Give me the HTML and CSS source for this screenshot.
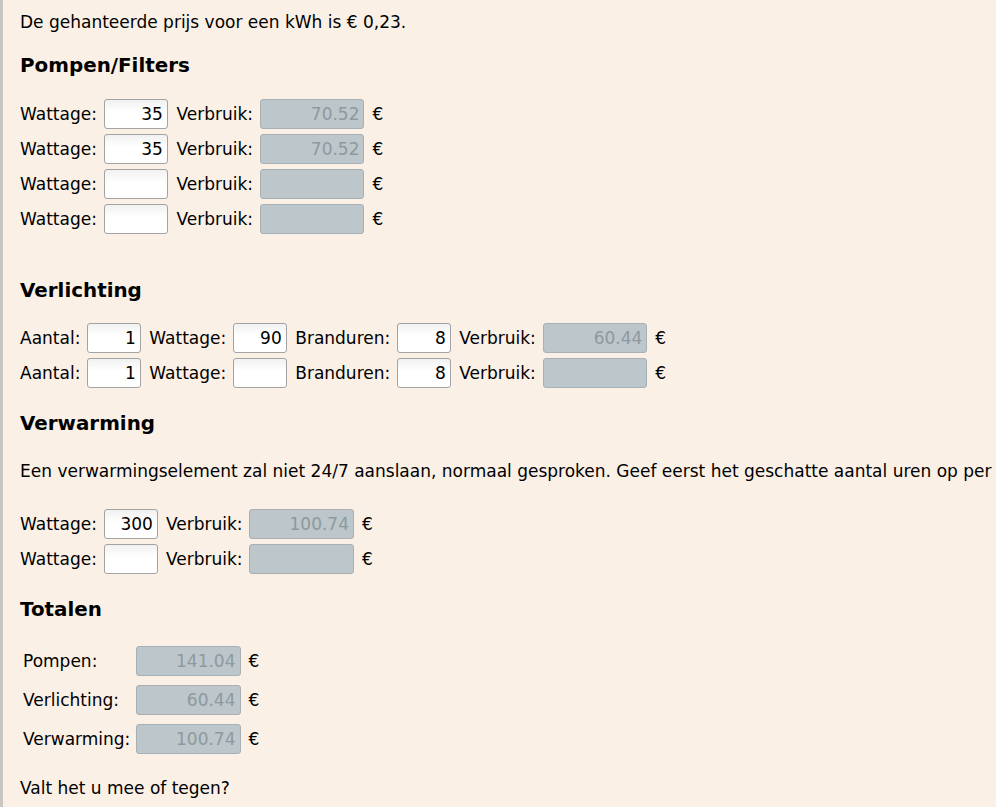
FILE: index.html
```html
<!DOCTYPE html>
<html lang="nl">
<head>
<meta charset="utf-8">
<title>Stroomverbruik</title>
<link rel="stylesheet" href="styles.css">
</head>
<body>
<div class="page">
  <p class="intro">De gehanteerde prijs voor een kWh is € 0,23.</p>

  <h3 class="section first">Pompen/Filters</h3>
  <div class="rows">
    <div class="row"><span class="lbl">Wattage:</span><input class="field wide" type="text" value="35"><span class="lbl">Verbruik:</span><input class="field out" type="text" value="70.52" disabled><span>€</span></div>
    <div class="row"><span class="lbl">Wattage:</span><input class="field wide" type="text" value="35"><span class="lbl">Verbruik:</span><input class="field out" type="text" value="70.52" disabled><span>€</span></div>
    <div class="row"><span class="lbl">Wattage:</span><input class="field wide" type="text" value=""><span class="lbl">Verbruik:</span><input class="field out" type="text" value="" disabled><span>€</span></div>
    <div class="row"><span class="lbl">Wattage:</span><input class="field wide" type="text" value=""><span class="lbl">Verbruik:</span><input class="field out" type="text" value="" disabled><span>€</span></div>
  </div>

  <h3 class="section light">Verlichting</h3>
  <div class="rows">
    <div class="row"><span class="lbl">Aantal:</span><input class="field" type="text" value="1"><span class="lbl">Wattage:</span><input class="field" type="text" value="90"><span class="lbl">Branduren:</span><input class="field" type="text" value="8"><span class="lbl">Verbruik:</span><input class="field out" type="text" value="60.44" disabled><span>€</span></div>
    <div class="row"><span class="lbl">Aantal:</span><input class="field" type="text" value="1"><span class="lbl">Wattage:</span><input class="field" type="text" value=""><span class="lbl">Branduren:</span><input class="field" type="text" value="8"><span class="lbl">Verbruik:</span><input class="field out" type="text" value="" disabled><span>€</span></div>
  </div>

  <h3 class="section heat">Verwarming</h3>
  <p class="note">Een verwarmingselement zal niet 24/7 aanslaan, normaal gesproken. Geef eerst het geschatte aantal uren op per</p>
  <div class="rows heat-rows">
    <div class="row"><span class="lbl">Wattage:</span><input class="field heat" type="text" value="300"><span class="lbl">Verbruik:</span><input class="field out" type="text" value="100.74" disabled><span>€</span></div>
    <div class="row"><span class="lbl">Wattage:</span><input class="field heat" type="text" value=""><span class="lbl">Verbruik:</span><input class="field out" type="text" value="" disabled><span>€</span></div>
  </div>

  <h3 class="section totals-head">Totalen</h3>
  <div class="totals">
    <span class="tlabel">Pompen:</span><input class="field out" type="text" value="141.04" disabled><span>€</span>
    <span class="tlabel">Verlichting:</span><input class="field out" type="text" value="60.44" disabled><span>€</span>
    <span class="tlabel">Verwarming:</span><input class="field out" type="text" value="100.74" disabled><span>€</span>
  </div>

  <p class="outro">Valt het u mee of tegen?</p>
</div>
</body>
</html>
```

FILE: styles.css
```css
html, body {
  margin: 0;
  padding: 0;
  background: #faf0e6;
}

body {
  font-family: "DejaVu Sans", "Liberation Sans", sans-serif;
  font-size: 17px;
  color: #000;
  overflow: hidden;
}

.page {
  border-left: 3px solid #c9c5c1;
  padding: 11.5px 0 20px 17px;
  min-height: 807px;
  box-sizing: border-box;
  white-space: nowrap;
}

.intro {
  margin: 0 0 22.5px;
}

.section {
  font-size: 19.89px;
  font-weight: bold;
  margin: 0 0 22px;
}

.section.light {
  margin-top: 45px;
  margin-bottom: 21px;
}

.section.heat {
  margin-top: 23.7px;
  margin-bottom: 26.4px;
}

.section.totals-head {
  margin-top: 24.4px;
  margin-bottom: 24.8px;
}

.note {
  margin: 0 0 28px;
}

.rows {
  display: flex;
  flex-direction: column;
  gap: 5px;
}

.row {
  display: flex;
  align-items: center;
  height: 30px;
}

.lbl {
  margin-right: 7px;
}

.field {
  box-sizing: border-box;
  width: 53.5px;
  height: 30px;
  margin: 0 8.5px 0 0;
  padding: 0 4px;
  border: 1px solid #a3a3a3;
  border-radius: 3px;
  background: linear-gradient(to bottom, #f1f1f1, #ffffff 45%);
  font-family: "DejaVu Sans", "Liberation Sans", sans-serif;
  font-size: 17px;
  color: #000;
  text-align: right;
}

.field.wide {
  width: 64px;
}

.field.heat {
  width: 54px;
  margin-right: 8px;
}

.field.out {
  width: 104.5px;
  margin-right: 8px;
  background: #bcc6cb;
  border-color: #a6b0b5;
  color: #8e999d;
}

.totals {
  display: grid;
  grid-template-columns: 105px 104.5px auto;
  column-gap: 8px;
  row-gap: 9px;
  align-items: center;
  justify-content: start;
  padding-left: 3px;
}

.totals .field.out {
  margin-right: 0;
}

.outro {
  margin: 23.3px 0 0;
}
```
